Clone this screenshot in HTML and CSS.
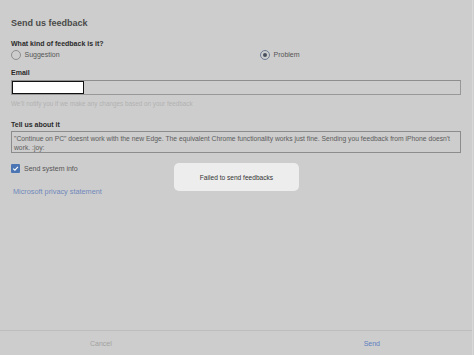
FILE: index.html
```html
<!DOCTYPE html>
<html lang="en">
<head>
    <meta charset="UTF-8">
    <title>Send us feedback</title>
    <link rel="stylesheet" href="styles.css">
</head>
<body>
    <div class="sheet">
        <div class="form">
            <h1 class="title">Send us feedback</h1>

            <!-- feedback kind -->
            <div class="label">What kind of feedback is it?</div>
            <div class="choices">
                <div class="choice">
                    <span class="radio"></span>
                    <span>Suggestion</span>
                </div>
                <div class="choice">
                    <span class="radio checked"></span>
                    <span>Problem</span>
                </div>
            </div>

            <!-- email -->
            <div class="label label-email">Email</div>
            <div class="input">
                <div class="redacted"></div>
            </div>
            <div class="hint">We'll notify you if we make any changes based on your feedback</div>

            <!-- details -->
            <div class="label label-tell">Tell us about it</div>
            <div class="textarea">"Continue on PC" doesnt work with the new Edge. The equivalent Chrome functionality works just fine. Sending you feedback from iPhone doesn't<br>work. :joy:</div>

            <div class="check-row">
                <span class="checkbox">
                    <svg width="9" height="9" viewBox="0 0 9 9"><path d="M2.2 4.6 L3.9 6.2 L6.9 2.9" fill="none" stroke="#fff" stroke-width="1.1"/></svg>
                </span>
                <span>Send system info</span>
            </div>

            <a class="privacy" href="#">Microsoft privacy statement</a>
        </div>

        <div class="footer">
            <span class="cancel">Cancel</span>
            <span class="send">Send</span>
        </div>

        <div class="toast">Failed to send feedbacks</div>
    </div>
</body>
</html>
```

FILE: styles.css
```css
html, body {
    margin: 0;
    height: 100%;
}
body {
    font-family: "Liberation Sans", Arial, sans-serif;
    background-color: #cdcdcd;
    color: #555;
    font-size: 7px;
}
.sheet {
    position: relative;
    height: 355px;
    display: flex;
    flex-direction: column;
    border-right: 1px solid #d8d8d8;
    box-sizing: border-box;
    width: 473px;
}
.form {
    padding: 18px 11px 0 11px;
    display: flex;
    flex-direction: column;
}
.title {
    margin: 0;
    font-size: 9px;
    line-height: 11px;
    font-weight: bold;
    color: #4a4a4a;
}
.label {
    margin-top: 9.5px;
    font-size: 7px;
    line-height: 9px;
    font-weight: bold;
    color: #2b2b2b;
}
.label-email {
    margin-top: 8px;
}
.label-tell {
    margin-top: 11.5px;
}
.choices {
    margin-top: 2.5px;
    display: grid;
    grid-template-columns: 249px 1fr;
}
.choice {
    display: flex;
    align-items: center;
    gap: 3.5px;
    height: 10px;
    line-height: 10px;
}
.radio {
    width: 10px;
    height: 10px;
    border: 1px solid #8d8d8d;
    border-radius: 50%;
    box-sizing: border-box;
    position: relative;
}
.radio.checked {
    border-color: #6d7d95;
}
.radio.checked::after {
    content: "";
    position: absolute;
    left: 2px;
    top: 2px;
    width: 4px;
    height: 4px;
    border-radius: 50%;
    background-color: #47505e;
}
.input {
    margin-top: 3px;
    height: 15px;
    border: 1px solid #989898;
    border-top-color: #8e8e8e;
    box-sizing: border-box;
}
.redacted {
    width: 72px;
    height: 13px;
    background-color: #fff;
    border: 1.5px solid #111;
    box-sizing: border-box;
}
.hint {
    margin-top: 5px;
    font-size: 6.35px;
    line-height: 8px;
    color: #b2b2b2;
}
.textarea {
    margin-top: 2.5px;
    height: 22px;
    border: 1px solid #8c8c8c;
    box-sizing: border-box;
    padding: 2.2px 2px 0 2px;
    font-size: 6.75px;
    line-height: 9px;
    color: #5c5c5c;
    white-space: nowrap;
    overflow: hidden;
}
.check-row {
    margin-top: 10px;
    display: flex;
    align-items: center;
    gap: 4px;
    height: 10px;
}
.checkbox {
    width: 9px;
    height: 9px;
    background-color: #4b76b3;
    border-radius: 1px;
    display: flex;
}
.privacy {
    margin-top: 13.5px;
    margin-left: 2px;
    font-size: 7.3px;
    line-height: 9px;
    color: #7189bb;
    text-decoration: none;
}
.footer {
    margin-top: auto;
    height: 24px;
    border-top: 1px solid #bdbdbd;
    display: flex;
    justify-content: space-between;
    align-items: center;
    padding: 0 92px 0 90px;
    font-size: 7px;
}
.cancel {
    color: #a2a2a2;
}
.send {
    color: #5e7fbf;
}
.toast {
    position: absolute;
    left: 174px;
    top: 163px;
    width: 125px;
    height: 28px;
    background-color: #ededed;
    border-radius: 5px;
    display: flex;
    align-items: center;
    justify-content: center;
    font-size: 6.6px;
    color: #333;
}
```
